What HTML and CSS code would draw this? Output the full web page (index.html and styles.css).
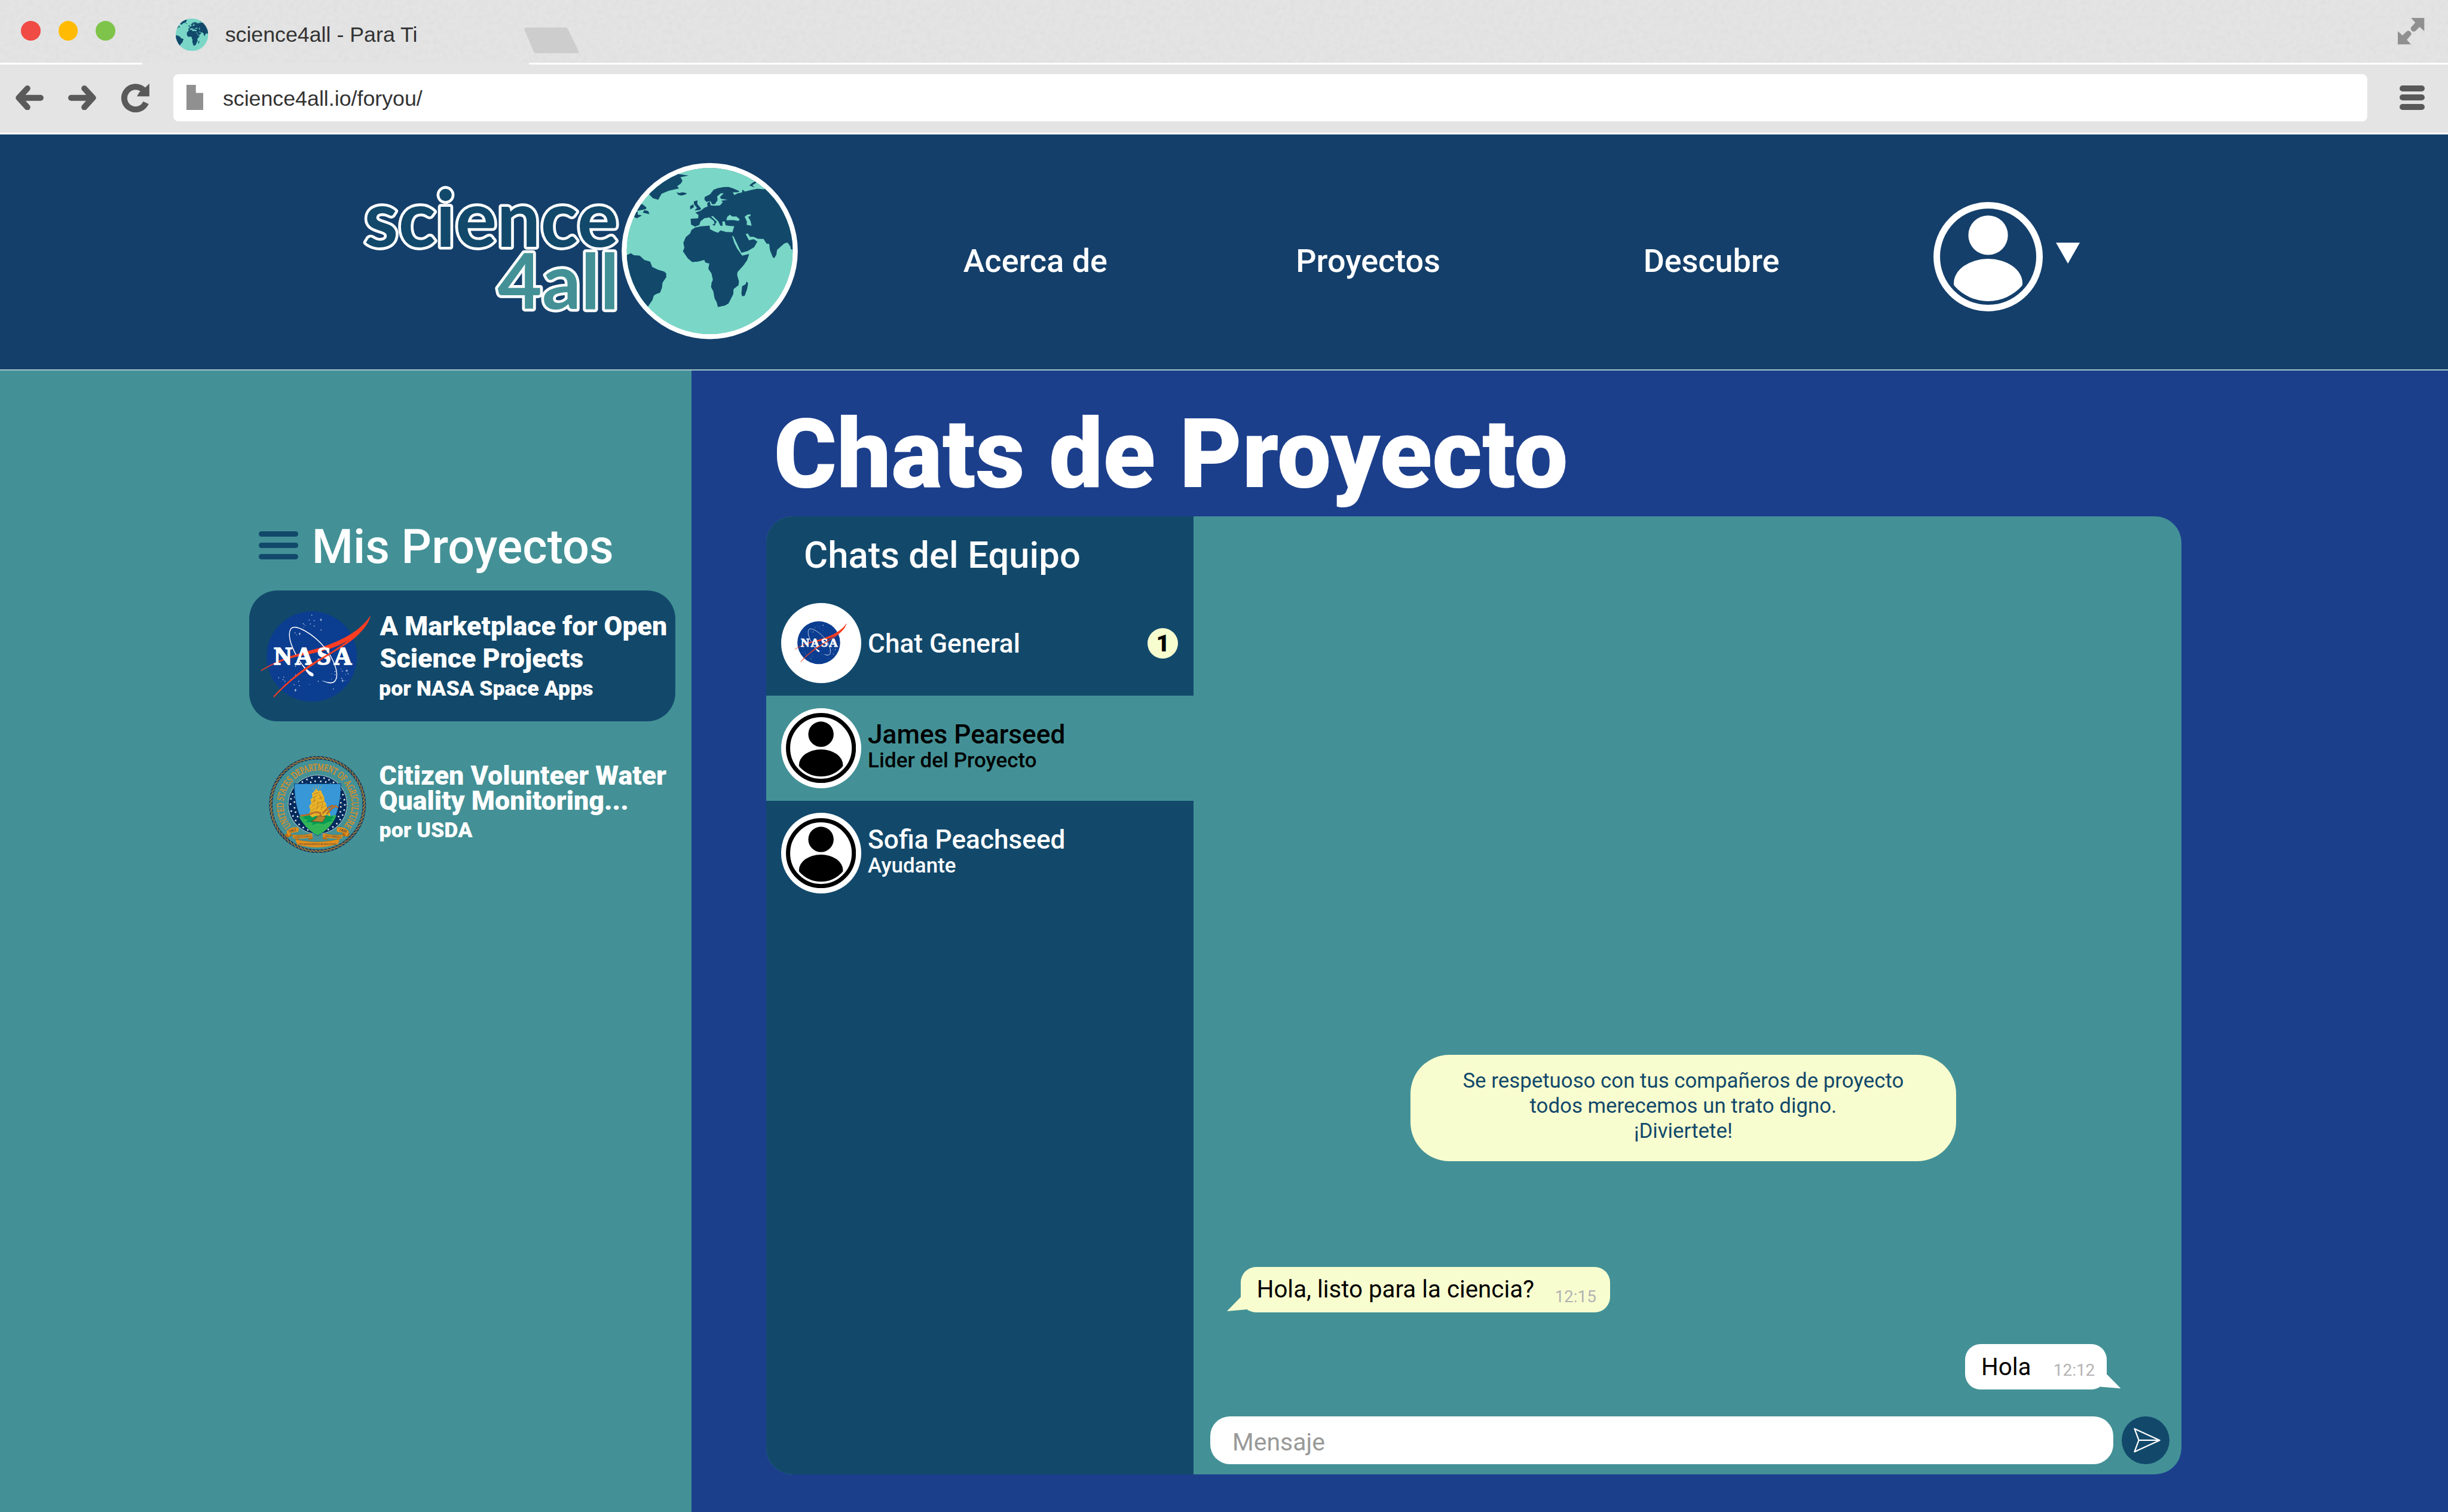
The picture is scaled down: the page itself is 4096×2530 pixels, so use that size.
FILE: index.html
```html
<!DOCTYPE html>
<html lang="es">
<head>
<meta charset="utf-8">
<title>science4all - Para Ti</title>
<link rel="stylesheet" href="styles.css">
</head>
<body>
<svg class="defs" width="0" height="0" aria-hidden="true">
  <defs>
    <clipPath id="globe-clip"><circle cx="663" cy="648" r="583"/></clipPath>
    <symbol id="globe" viewBox="80 65 1166 1166">
      <circle cx="663" cy="648" r="583" fill="#7ad7c7"/>
      <g clip-path="url(#globe-clip)" fill="#12496b">
        <path d="M562 378 L600 365 L625 345 L648 335 L645 312 L662 300 L670 328 L700 330 L735 328 L755 305 L742 295 L788 288 L742 282 L735 268 L762 243 L740 243 L715 265 L718 290 L700 318 L680 320 L668 298 L640 303 L626 288 L628 268 L665 250 L690 218 L720 206 L760 199 L795 198 L830 210 L872 228 L860 236 L825 236 L835 256 L858 243 L890 237 L892 217 L910 231 L960 218 L1000 211 L1045 215 L1100 150 L1300 350 L1300 636 L1232 636 L1228 615 L1208 588 L1185 595 L1135 640 L1130 675 L1115 698 L1105 692 L1085 640 L1080 598 L1062 596 L1040 563 L1000 562 L970 548 L945 548 L930 525 L915 528 L938 572 L972 565 L997 582 L975 620 L930 648 L885 660 L870 630 L830 545 L820 542 L835 590 L855 630 L890 680 L940 668 L925 712 L900 748 L858 795 L855 815 L868 860 L865 887 L830 915 L828 950 L795 1015 L770 1030 L720 1040 L712 1008 L697 980 L688 930 L672 900 L676 870 L685 850 L675 805 L653 772 L660 735 L632 728 L625 710 L580 722 L540 725 L510 700 L475 650 L485 625 L478 590 L495 550 L525 525 L535 500 L560 483 L600 475 L663 469 L664 493 L690 508 L722 520 L738 503 L780 514 L822 516 L835 474 L800 472 L775 467 L768 440 L752 440 L753 470 L738 470 L722 438 L685 402 L672 405 L712 442 L704 456 L698 470 L680 463 L697 455 L692 436 L660 412 L625 418 L598 440 L590 465 L560 477 L532 462 L529 421 L582 418 L584 395 Z"/>
        <path d="M240 252 L180 210 L420 90 L446 108 L515 118 L458 130 L472 155 L460 175 L435 193 L447 208 L375 225 L325 246 L302 288 L265 278 Z"/>
        <path d="M430 235 L447 241 L475 236 L502 242 L495 250 L465 259 L442 254 Z"/>
        <path d="M552 300 L577 292 L576 318 L603 350 L594 360 L556 364 L574 346 L552 318 Z"/>
        <path d="M525 333 L548 320 L552 340 L526 356 Z"/>
        <path d="M130 330 L190 318 L218 340 L218 352 L195 358 L155 366 Z"/>
        <path d="M193 378 L205 360 L232 368 L240 390 Z"/>
        <path d="M125 385 L158 370 L158 392 L188 398 L152 418 L125 405 Z"/>
        <path d="M70 680 L110 663 L130 677 L172 680 L205 710 L245 722 L260 760 L300 778 L345 792 L358 806 L358 832 L332 870 L328 905 L315 940 L285 950 L270 962 L262 990 L228 1040 L100 1040 Z"/>
        <path d="M922 860 L932 875 L925 915 L908 962 L890 965 L885 945 L890 895 L915 880 Z"/>
        <path d="M940 188 L965 168 L1000 152 L985 172 L962 187 L978 202 Z"/>
      </g>
      <g fill="#7ad7c7">
        <path d="M779 432 L786 408 L805 393 L820 405 L850 405 L873 425 L865 437 L830 431 Z"/>
        <path d="M908 408 L928 392 L950 391 L948 402 L932 408 L948 435 L957 470 L922 464 L924 442 Z"/>
      </g>
    </symbol>

    <symbol id="nasa" viewBox="0 0 840 720">
      <g transform="scale(1 1.148)">
        <ellipse cx="389" cy="327" rx="317" ry="276" fill="#0b3d91"/>
        <g fill="#fff">
          <circle cx="389" cy="74" r="3"/><circle cx="370" cy="104" r="3"/><circle cx="406" cy="108" r="3"/><circle cx="379" cy="128" r="3"/><circle cx="406" cy="141" r="3"/><circle cx="454" cy="165" r="3"/><circle cx="329" cy="127" r="3"/><circle cx="336" cy="132" r="2"/><circle cx="344" cy="137" r="2"/><circle cx="332" cy="147" r="2"/><circle cx="271" cy="183" r="3"/><circle cx="283" cy="195" r="2"/>
          <circle cx="275" cy="386" r="3"/><circle cx="157" cy="457" r="3"/><circle cx="192" cy="453" r="3"/><circle cx="187" cy="469" r="3"/><circle cx="201" cy="479" r="3"/><circle cx="242" cy="467" r="2"/><circle cx="276" cy="440" r="3"/><circle cx="297" cy="479" r="3"/><circle cx="265" cy="500" r="3"/><circle cx="302" cy="506" r="3"/><circle cx="373" cy="499" r="2"/><circle cx="434" cy="479" r="3"/><circle cx="540" cy="526" r="3"/><circle cx="528" cy="433" r="2"/><circle cx="528" cy="465" r="2"/><circle cx="552" cy="419" r="3"/><circle cx="552" cy="438" r="3"/><circle cx="593" cy="402" r="2"/><circle cx="603" cy="417" r="3"/><circle cx="644" cy="433" r="3"/><circle cx="627" cy="438" r="2"/><circle cx="599" cy="461" r="3"/><circle cx="624" cy="475" r="2"/>
          <path d="M453 91l2 10 10 1-10 2-2 9-2-9-10-2 10-1zM304 177l2 10 9 1-9 2-2 9-2-9-9-2 9-1zM274 522l2 10 10 1-10 2-2 9-2-9-10-2 10-1zM634 403l2 10 10 1-10 2-2 9-2-9-10-2 10-1zM605 464l2 10 10 1-10 2-2 9-2-9-10-2 10-1z"/>
        </g>
        <path fill="#fc3d21" d="M30 412 C110 368 190 338 275 315 C350 297 390 288 440 275 C600 232 730 170 802 76 C780 150 720 190 650 225 C560 275 480 292 380 311 C320 322 290 327 240 338 C160 358 90 385 35 416 Z"/>
        <path fill="none" stroke="#fff" stroke-width="6" d="M278 316 C240 255 218 190 241 159 C272 122 400 190 480 273 C548 345 578 432 558 467 C549 486 525 490 505 487"/>
        <path fill="#fff" d="M510 490 C495 488 478 482 462 476 V474 C480 479 495 483 510 484 Z"/>
      </g>
      <text class="nasa-word" x="123 271 425 543" y="434">NASA</text>
      <g transform="scale(1 1.148)">
        <path fill="#fff" d="M298 353 L307 354 C330 385 355 410 392 427 C404 434 404 446 396 448 C380 450 365 436 352 420 Z"/>
        <path fill="#fc3d21" d="M802 76 C765 180 650 245 560 292 C430 360 270 440 122 578 L120 570 C230 465 340 392 450 338 C540 293 600 258 652 223 C700 195 770 140 802 76 Z"/>
      </g>
    </symbol>

    <path id="star" fill="#fff" d="M0-9 2.6-3 9-2.8 4-1.2 3.6 1.6 5.6 8 0 4.4-5.6 8-3.6 1.6-9-2.8-2.6-3z"/>
    <g id="star-rows">
      <use href="#star" transform="rotate(3) translate(0 -191)"/><use href="#star" transform="rotate(14) translate(0 -191)"/><use href="#star" transform="rotate(25) translate(0 -191)"/><use href="#star" transform="rotate(36) translate(0 -191)"/><use href="#star" transform="rotate(47) translate(0 -191)"/><use href="#star" transform="rotate(58) translate(0 -191)"/><use href="#star" transform="rotate(69) translate(0 -191)"/><use href="#star" transform="rotate(80) translate(0 -191)"/>
      <use href="#star" transform="rotate(8) translate(0 -164)"/><use href="#star" transform="rotate(20) translate(0 -168)"/><use href="#star" transform="rotate(32) translate(0 -170)"/><use href="#star" transform="rotate(63) translate(0 -164)"/><use href="#star" transform="rotate(75) translate(0 -164)"/><use href="#star" transform="rotate(86) translate(0 -164)"/>
    </g>
    <path id="seal-arc" d="M240.800 1561.600 A240 240 0 1 1 614.200 1561.600"/>

    <symbol id="person" viewBox="-128 -128 256 256">
      <circle r="120.200" fill="none" stroke="currentColor" stroke-width="15.300"/>
      <circle cy="-50.400" r="46.300" fill="currentColor"/>
      <path fill="currentColor" d="M-80.300 62 A80.300 57 0 0 1 80.300 62 Q80.500 66 79 68 A104.500 104.500 0 0 1 -79 68 Q-80.500 66 -80.300 62 Z"/>
    </symbol>
  </defs>
</svg>

<div class="browser">
  <div class="tabbar">
    <div class="lights"><i class="light red"></i><i class="light amber"></i><i class="light green"></i></div>
    <div class="tab"><svg class="favicon"><use href="#globe"/></svg><span>science4all - Para Ti</span></div>
    <svg class="newtab" viewBox="0 0 128 61"><path fill="#cdcdcd" d="M5 0H96Q101 0 103 5L127 55Q129 61 124 61H31Q25 61 22 56L1 6Q-1 0 5 0Z"/></svg>
    <svg class="expand" viewBox="0 0 62 62" fill="#909090"><path d="M31 0H62V31L51 21 42 30Q38 33 34 31 29 27 31 22L41 11Z"/><path d="M31 62H0V31L11 41 20 32Q24 29 28 31 33 35 31 40L21 51Z"/></svg>
  </div>
  <div class="toolbar">
    <svg class="nav-icon" viewBox="0 0 67 58"><path d="M10 29H60M29 7 9 29 29 51"/></svg>
    <svg class="nav-icon" viewBox="0 0 67 58"><path d="M7 29H57M38 7 58 29 38 51"/></svg>
    <svg class="reload" viewBox="0 0 68 68"><path fill="none" stroke="#5a5a5a" stroke-width="14" d="M59 46 A26.500 26.500 0 1 1 53 16"/><path fill="#5a5a5a" d="M67 1V31H38L43 22 57 11Z"/></svg>
    <div class="url">
      <svg class="file" viewBox="0 0 40 59"><path fill="#909090" d="M0 0H22V19H40V59H0Z"/></svg>
      <span>science4all.io/foryou/</span>
    </div>
    <div class="menu"><i></i><i></i><i></i></div>
  </div>
</div>

<header class="header">
  <svg class="logo" viewBox="845 375 1025 425">
    <circle cx="1660.900" cy="586.300" r="200" fill="none" stroke="#fff" stroke-width="12"/>
    <use href="#globe" x="1466.400" y="391.800" width="389" height="389"/>
    <text class="logo-top" x="852.500" y="576.500">science</text>
    <text class="logo-bottom" x="1164.500" y="722">4all</text>
  </svg>
  <a class="nav-link">Acerca de</a>
  <a class="nav-link">Proyectos</a>
  <a class="nav-link">Descubre</a>
  <div class="account">
    <svg class="account-icon"><use href="#person"/></svg>
    <svg class="caret" viewBox="0 0 56 49"><path fill="#fff" d="M0 0H56L28 49Z"/></svg>
  </div>
</header>

<main class="main">
  <aside class="sidebar">
    <div class="sidebar-title">
      <div class="bars"><i></i><i></i><i></i></div>
      <h2>Mis Proyectos</h2>
    </div>
    <div class="project active">
      <svg class="project-nasa"><use href="#nasa"/></svg>
      <div class="project-text">
        <h3>A Marketplace for Open<br>Science Projects</h3>
        <p>por NASA Space Apps</p>
      </div>
    </div>
    <div class="project usda">
      <svg class="project-usda" viewBox="78 1058 700 706">
        <g fill="none">
          <circle cx="427.500" cy="1411" r="328" stroke="#002a5c" stroke-width="23"/>
          <g stroke="#b98a3c" stroke-width="4">
            <circle cx="427.500" cy="1411" r="335" pathLength="740" stroke-dasharray="5 5" stroke-dashoffset="1"/>
            <circle cx="427.500" cy="1411" r="331.500" pathLength="740" stroke-dasharray="7 3" stroke-dashoffset="0"/>
            <circle cx="427.500" cy="1411" r="328" pathLength="740" stroke-dasharray="7.500 2.500" stroke-dashoffset="-2"/>
            <circle cx="427.500" cy="1411" r="324.500" pathLength="740" stroke-dasharray="7 3" stroke-dashoffset="-4"/>
            <circle cx="427.500" cy="1411" r="321" pathLength="740" stroke-dasharray="5 5" stroke-dashoffset="-7"/>
          </g>
        </g>
        <text class="seal-text"><textPath href="#seal-arc" textLength="1080" lengthAdjust="spacingAndGlyphs">UNITED STATES DEPARTMENT OF AGRICULTURE</textPath></text>
        <circle cx="428" cy="1411" r="206" fill="#002a5c"/>
        <circle cx="428" cy="1411" r="206" fill="none" stroke="#fff" stroke-width="5" stroke-dasharray="5 5"/>
        <g transform="translate(428 1411)">
          <use href="#star-rows"/><use href="#star-rows" transform="rotate(88)"/><use href="#star-rows" transform="rotate(176)"/><use href="#star-rows" transform="rotate(268)"/>
        </g>
        <g transform="scale(1 1.148)">
          <path fill="#3897d6" stroke="#002a5c" stroke-width="3" d="M265 1102 H591 C594 1230 560 1362 428 1420 C298 1362 262 1230 265 1102 Z"/>
          <path fill="#31b457" d="M298 1304 Q340 1290 380 1296 L520 1300 Q545 1292 560 1296 C535 1350 490 1392 428 1418 C370 1392 325 1350 298 1304 Z"/>
          <path fill="#009b55" d="M318 1314 L345 1300 L400 1294 L520 1298 L548 1308 L520 1318 L538 1328 L500 1336 L470 1350 L430 1344 L385 1356 L396 1340 L345 1336 L362 1322 Z"/>
          <path fill="#e9b32a" d="M418 1132 L432 1146 L450 1142 L462 1165 L474 1185 L476 1210 L488 1222 L492 1246 L512 1270 L518 1302 L490 1292 L460 1306 L420 1298 L390 1308 L366 1290 L378 1262 L368 1240 L384 1222 L378 1198 L392 1186 L388 1160 L402 1152 Z"/>
          <path fill="none" stroke="#a9701a" stroke-width="3" d="M400 1165 L440 1155 M395 1190 L428 1172 M432 1195 L465 1185 M390 1215 L420 1200 M425 1225 L470 1208 M385 1245 L412 1222 M420 1255 L450 1230 M455 1250 L485 1235 M380 1275 L410 1250 M470 1275 L505 1262 M408 1180 L400 1215 M440 1165 L455 1200 M432 1210 L420 1260 M465 1215 L452 1262"/>
          <path fill="none" stroke="#e9b32a" stroke-width="2" d="M405 1148 L398 1120 M418 1135 L414 1108 M428 1140 L436 1108 M440 1140 L456 1116 M396 1135 L384 1128"/>
          <path fill="none" stroke="#6e3f14" stroke-width="10" stroke-linejoin="round" d="M308 1298 L360 1292 L412 1276 L445 1280 L452 1300 M462 1284 L505 1247 L532 1236 L546 1244 M492 1288 L528 1252 L556 1238 L572 1248"/>
          <path fill="none" stroke="#d07b30" stroke-width="7" stroke-linejoin="round" d="M308 1298 L360 1292 L412 1276 L445 1280 L452 1300 M462 1284 L505 1247 L532 1236 L546 1244 M492 1288 L528 1252 L556 1238 L572 1248"/>
          <path fill="#b4842f" stroke="#6e3f14" stroke-width="3" d="M385 1332 L412 1318 L430 1298 L487 1303 L462 1336 Z"/>
          <path fill="#b86b13" d="M196 1412 L230 1400 L252 1420 L210 1432 Z M604 1400 L658 1408 L640 1426 L600 1420 Z M268 1428 L300 1445 L282 1466 Z M588 1428 L556 1445 L574 1466 Z M388 1410 L394 1440 L360 1446 Z M468 1410 L462 1440 L500 1446 Z"/>
          <path fill="#e28f1c" d="M212 1390 Q245 1362 290 1369 Q302 1380 290 1396 L240 1404 L228 1424 Q208 1410 212 1390 Z"/>
          <path fill="#e28f1c" d="M646 1390 Q612 1362 568 1369 Q556 1380 566 1396 L618 1404 L628 1424 Q650 1410 646 1390 Z"/>
          <path fill="#e28f1c" d="M252 1414 Q320 1420 388 1406 L392 1430 Q320 1442 256 1436 Z M604 1414 Q536 1420 468 1406 L464 1430 Q536 1442 600 1436 Z"/>
          <path fill="#e28f1c" d="M272 1442 Q428 1474 582 1440 L570 1472 Q428 1510 286 1474 Z"/>
          <path fill="none" stroke="#8a5412" stroke-width="1.500" d="M252 1414 Q320 1420 388 1406 M604 1414 Q536 1420 468 1406 M272 1442 Q428 1474 582 1440"/>
        </g>
        <g class="ribbon-text">
          <text class="ribbon-year" transform="translate(252 1602) rotate(-17)">1862</text>
          <text class="ribbon-year" transform="translate(603 1602) rotate(17)">1889</text>
          <text x="323" y="1643" textLength="120" lengthAdjust="spacingAndGlyphs" transform="rotate(-3 323 1643)">AGRICULTURE IS</text>
          <text x="534" y="1643" textLength="116" lengthAdjust="spacingAndGlyphs" transform="rotate(3 534 1643)">AND COMMERCE</text>
          <text x="427" y="1695" textLength="264" lengthAdjust="spacingAndGlyphs">THE FOUNDATION OF MANUFACTURE</text>
        </g>
      </svg>
      <div class="project-text">
        <h3>Citizen Volunteer Water<br>Quality Monitoring...</h3>
        <p>por USDA</p>
      </div>
    </div>
  </aside>

  <section class="content">
    <h1>Chats de Proyecto</h1>
    <div class="panel">
      <div class="team">
        <h2>Chats del Equipo</h2>
        <div class="member">
          <div class="avatar"><svg class="avatar-nasa"><use href="#nasa"/></svg></div>
          <div class="member-text general"><b>Chat General</b></div>
          <span class="badge">1</span>
        </div>
        <div class="member selected">
          <div class="avatar"><svg class="avatar-person"><use href="#person"/></svg></div>
          <div class="member-text"><b>James Pearseed</b><small>Lider del Proyecto</small></div>
        </div>
        <div class="member">
          <div class="avatar"><svg class="avatar-person"><use href="#person"/></svg></div>
          <div class="member-text"><b>Sofia Peachseed</b><small>Ayudante</small></div>
        </div>
      </div>
      <div class="chat">
        <p class="notice">Se respetuoso con tus compañeros de proyecto<br>todos merecemos un trato digno.<br>¡Diviertete!</p>
        <div class="bubble received"><span>Hola, listo para la ciencia?</span><time>12:15</time></div>
        <div class="bubble sent"><span>Hola</span><time>12:12</time></div>
        <div class="composer">
          <div class="field">Mensaje</div>
          <div class="send"><svg viewBox="-56 -56 112 112" fill="none" stroke="#fff" stroke-width="3.200" stroke-linejoin="round"><path d="M-26-27 33 0-26 27-16 0ZM-16 0H33"/></svg></div>
        </div>
      </div>
    </div>
  </section>
</main>
</body>
</html>
```
FILE: styles.css
```css
/* 1rem is 100 design units; the design is 57.27rem wide */
html { font-size: 71.521px; }
* { box-sizing: border-box; margin: 0; padding: 0; }
body {
  width: 57.27rem;
  height: 35.38rem;
  overflow: hidden;
  display: flex;
  flex-direction: column;
  background: #1c3f8c;
  color: #fff;
  font-family: Roboto, "Liberation Sans", sans-serif;
  white-space: nowrap;
}
svg { display: block; flex: none; }
.defs { position: absolute; }

/* browser chrome */
.browser { flex: none; font-family: "Liberation Sans", Arial, sans-serif; font-size: .5rem; color: #333; }
.tabbar {
  height: 1.47rem;
  display: flex;
  align-items: center;
  padding: 0 .55rem 0 .49rem;
  background: #e4e4e4 url("data:image/svg+xml,%3Csvg xmlns='http://www.w3.org/2000/svg' width='400' height='400'%3E%3Cfilter id='n' x='0' y='0' width='1' height='1'%3E%3CfeTurbulence type='fractalNoise' baseFrequency='.12' numOctaves='3' stitchTiles='stitch'/%3E%3CfeColorMatrix values='0 0 0 0 .6 0 0 0 0 .6 0 0 0 0 .6 .35 0 0 0 -.12'/%3E%3C/filter%3E%3Crect width='400' height='400' filter='url(%23n)'/%3E%3C/svg%3E");
}
.lights { display: flex; gap: .415rem; margin-bottom: .03rem; }
.light { width: .46rem; height: .46rem; border-radius: 50%; }
.red { background: #f04b44; }
.amber { background: #ffbb03; }
.green { background: #7ec44a; }
.tab { width: 8.155rem; margin-left: 1.405rem; padding-top: .16rem; display: flex; align-items: center; gap: .402rem; }
.tab span { padding-top: .015rem; }
.favicon { width: .76rem; height: .76rem; }
.newtab { width: 1.28rem; height: .61rem; margin-top: .42rem; }
.expand { width: .62rem; height: .62rem; margin-left: auto; }
.toolbar {
  height: 1.67rem;
  display: flex;
  align-items: center;
  padding: 0 .55rem 0 .35rem;
  border-bottom: .045rem solid #fff;
  background: linear-gradient(90deg, #fff 3.33rem, #e4e4e4 3.33rem 12.38rem, #fff 12.38rem) top / 100% .045rem no-repeat, #e4e4e4;
}
.nav-icon { width: .67rem; height: .58rem; margin-right: .57rem; fill: none; stroke: #5a5a5a; stroke-width: 14; stroke-linecap: round; stroke-linejoin: round; }
.reload { width: .68rem; height: .68rem; }
.url { flex: 1; height: 1.11rem; margin: 0 .76rem 0 .55rem; padding-left: .3rem; border-radius: .12rem; background: #fff; display: flex; align-items: center; gap: .455rem; }
.url span { padding-top: .06rem; }
.file { width: .4rem; height: .59rem; }
.menu { display: flex; flex-direction: column; gap: .08rem; }
.menu i { width: .58rem; height: .14rem; border-radius: .07rem; background: #595959; }

/* site header */
.header {
  flex: none;
  height: 5.53rem;
  padding-left: 8.45rem;
  display: grid;
  grid-template-columns: 14.086rem 7.78rem 8.13rem 6.782rem auto;
  align-items: center;
  background: #143f6a;
  border-bottom: .03rem solid #a3c3c9;
}
.logo { width: 10.25rem; height: 4.25rem; }
.logo text { font-family: Lato, sans-serif; font-weight: 700; font-size: 181.500px; stroke: #fff; stroke-width: 13px; stroke-linejoin: round; paint-order: stroke; }
.logo .logo-top { fill: #12496b; }
.logo .logo-bottom { fill: #439196; font-size: 179.500px; }
.nav-link { font-size: .754rem; font-weight: 500; margin-top: .42rem; }
.account { display: flex; align-items: center; margin-top: .22rem; }
.account-icon { width: 2.56rem; height: 2.56rem; }
.caret { width: .56rem; height: .49rem; margin: 0 0 .16rem .316rem; }

/* layout */
.main { flex: 1; display: grid; grid-template-columns: 16.18rem 1fr; }
.sidebar { padding: 3.46rem 0 0 5.834rem; background: #439196; }
.sidebar-title { height: 1.3rem; display: flex; align-items: center; gap: .31rem; padding-left: .22rem; }
.sidebar-title h2 { font-size: 1.108rem; font-weight: 500; line-height: 1.3rem; }
.bars { display: flex; flex-direction: column; gap: .13rem; margin-bottom: .04rem; }
.bars i { width: .93rem; height: .136rem; border-radius: .068rem; background: #12496b; }

.project { width: 9.97rem; display: flex; align-items: flex-start; }
.project.active { height: 3.06rem; margin-top: .38rem; padding: .3rem 0 0 .166rem; border-radius: .66rem; background: #12496b; }
.project-nasa { width: 2.8rem; height: 2.4rem; }
.project.usda { margin-top: .77rem; padding-left: .426rem; }
.project-usda { width: 2.333rem; height: 2.353rem; }
.project-text { margin: .169rem 0 0 .085rem; }
.project-text h3 { font-size: .626rem; font-weight: 900; line-height: .756rem; }
.project-text p { font-size: .5rem; font-weight: 900; line-height: .646rem; margin-left: -.02rem; }
.usda .project-text { margin: .213rem 0 0 .28rem; }
.usda .project-text h3 { line-height: .59rem; }
.usda .project-text p { line-height: .8rem; margin-left: 0; }

.nasa-word { font-family: "Liberation Serif", "Times New Roman", serif; font-weight: 700; font-size: 176px; fill: #fff; stroke: #fff; stroke-width: 7px; }
.seal-text { font-family: "Liberation Serif", "Times New Roman", serif; font-size: 70px; fill: #e28f1c; stroke: #e28f1c; stroke-width: 2px; }
.ribbon-text { font-family: "Liberation Serif", "Times New Roman", serif; font-size: 21px; fill: #1c2f4c; text-anchor: middle; }
.ribbon-year { font-size: 28px; }

/* chat panel */
.content { padding: .765rem 0 0 1.75rem; }
.content h1 { font-size: 2.253rem; font-weight: 900; line-height: 2.4rem; padding-left: .17rem; }
.panel { width: 33.106rem; height: 22.407rem; margin-top: .245rem; border-radius: .62rem; overflow: hidden; display: flex; background: #439196; }
.team { width: 9.987rem; background: #12496b; }
.team h2 { height: 1.74rem; padding-left: .877rem; font-size: .862rem; font-weight: 500; line-height: 1.84rem; }
.member { height: 2.457rem; padding-left: .338rem; display: flex; align-items: center; }
.member.selected { background: #439196; color: #000; }
.avatar { width: 1.88rem; height: 1.88rem; border-radius: 50%; background: #fff; color: #000; display: flex; align-items: center; justify-content: center; }
.avatar-person { width: 1.64rem; height: 1.64rem; }
.avatar-nasa { width: 1.327rem; height: 1.137rem; margin-bottom: .06rem; }
.member-text { margin: 0 0 .07rem .155rem; display: flex; flex-direction: column; }
.member-text.general { margin-bottom: -.04rem; }
.member-text b { font-size: .618rem; font-weight: 500; line-height: .66rem; }
.member-text small { font-size: .49rem; font-weight: 500; line-height: .556rem; }
.badge { width: .715rem; height: .715rem; margin: 0 .353rem 0 auto; border-radius: 50%; background: #f8fdcf; color: #000; font-size: .55rem; font-weight: 900; line-height: .73rem; text-align: center; }

.chat { flex: 1; padding-top: 12.6rem; }
.notice { width: 12.758rem; height: 2.486rem; margin-left: 5.083rem; padding-top: .325rem; border-radius: .91rem; background: #f8fdcf; color: #12496b; font-size: .487rem; line-height: .586rem; text-align: center; }
.bubble { position: relative; height: 1.057rem; border-radius: .36rem; display: flex; align-items: center; justify-content: space-between; color: #000; font-size: .563rem; }
.bubble time { font-size: .39rem; color: #b3b3b3; }
.bubble::after { content: ""; position: absolute; top: .7rem; width: .48rem; height: .34rem; background: inherit; }
.received { width: 8.635rem; margin: 2.477rem 0 0 1.112rem; padding: 0 .32rem 0 .371rem; background: #f8fdcf; }
.received time { margin-top: .33rem; }
.received::after { left: -.325rem; clip-path: polygon(68% 0, 100% 0, 98% 86%, 0 98%); }
.sent { width: 3.324rem; margin: .753rem 1.746rem 0 auto; padding: 0 .28rem 0 .385rem; background: #fff; }
.sent time { margin-top: .14rem; }
.sent::after { right: -.325rem; clip-path: polygon(0 0, 32% 0, 100% 98%, 2% 86%); }
.composer { margin: .63rem 0 0 .391rem; display: flex; }
.field { width: 21.137rem; height: 1.117rem; padding: .1rem 0 0 .523rem; border-radius: .46rem; background: #fff; color: #999; font-size: .573rem; line-height: 1.017rem; }
.send { width: 1.12rem; height: 1.117rem; margin-left: .195rem; border-radius: 50%; background: #12496b; }
.send svg { width: 100%; height: 100%; }
```
